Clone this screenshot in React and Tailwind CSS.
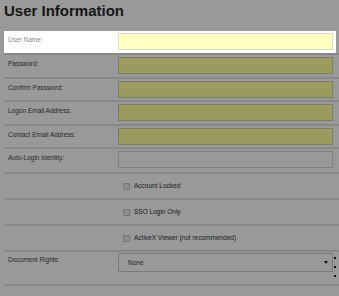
const Row = ({ label, children, className = "", labelClass = "text-[#282828]" }) => (
  <div className={`flex ${className}`}>
    <div className={`w-[114px] shrink-0 pl-1 pt-[3px] text-[6.5px] leading-[8px] ${labelClass}`}>
      {label}
    </div>
    <div className="flex">{children}</div>
  </div>
);

const Input = ({ light }) => (
  <div
    className={
      light
        ? "w-[215px] h-[17px] border border-[#dedcc4] bg-[#ffffc2]"
        : "w-[215px] h-[17px] border border-[#7e7e62] bg-[#9b9b5f]"
    }
  />
);

const CheckRow = ({ text }) => (
  <div className="flex items-center h-[26px] border-t-2 border-[#888888]">
    <div className="w-[119px] shrink-0" />
    <div className="w-[7px] h-[7px] rounded-[1px] border border-[#747474] bg-[#8e8e8e]" />
    <span className="ml-[4px] text-[6.5px] leading-[8px] text-[#1a1a1a]">{text}</span>
  </div>
);

export default function App() {
  return (
    <div className="w-[339px] h-[296px] bg-[#999999] overflow-hidden font-['Liberation_Sans',Arial,sans-serif]">
      <h1 className="pl-1 pt-[2px] text-[15px] leading-[18px] font-bold text-[#161616]">
        User Information
      </h1>
      <div className="mt-[11px] ml-1">
        <Row
          label="User Name:"
          className="w-[332px] bg-white pt-[2px] pb-[3px]"
          labelClass="text-[#8a8a8a]"
        >
          <Input light />
        </Row>
        <Row label="Password:" className="border-t-2 border-[#888888] pt-[2px] pb-[3px]">
          <Input />
        </Row>
        <Row label="Confirm Password:" className="border-t-2 border-[#888888] pt-[2px] pb-[2px]">
          <Input />
        </Row>
        <Row label="Logon Email Address:" className="border-t-2 border-[#888888] pt-[2px] pb-[3px]">
          <Input />
        </Row>
        <Row label="Contact Email Address:" className="border-t-2 border-[#888888] pt-[2px] pb-[2px]">
          <Input />
        </Row>
        <Row label="Auto-Login Identity:" className="border-t-2 border-[#888888] pt-[2px] pb-[4px]">
          <div className="w-[215px] h-[17px] border border-[#808080] bg-[#999999]" />
        </Row>
        <CheckRow text="Account Locked" />
        <CheckRow text="SSO Login Only" />
        <CheckRow text="ActiveX Viewer (not recommended)" />
        <Row
          label="Document Rights:"
          className="h-[36px] border-t-2 border-b-2 border-[#888888] pt-[1px]"
        >
          <div className="w-[215px] h-[19px] flex items-center justify-between border border-[#7a7a7a] bg-[#999999] pl-[9px] pr-[4px]">
            <span className="text-[6.5px] leading-[8px] text-[#1e1e1e]">None</span>
            <svg width="4" height="3" viewBox="0 0 4 3">
              <path d="M0 0H4L2 3Z" fill="#111" />
            </svg>
          </div>
          <div className="ml-[1px] flex flex-col gap-[7px] pt-[4px]">
            <div className="w-[2px] h-[2px] bg-[#111]" />
            <div className="w-[2px] h-[2px] bg-[#111]" />
            <div className="w-[2px] h-[2px] bg-[#111]" />
          </div>
        </Row>
      </div>
    </div>
  );
}
